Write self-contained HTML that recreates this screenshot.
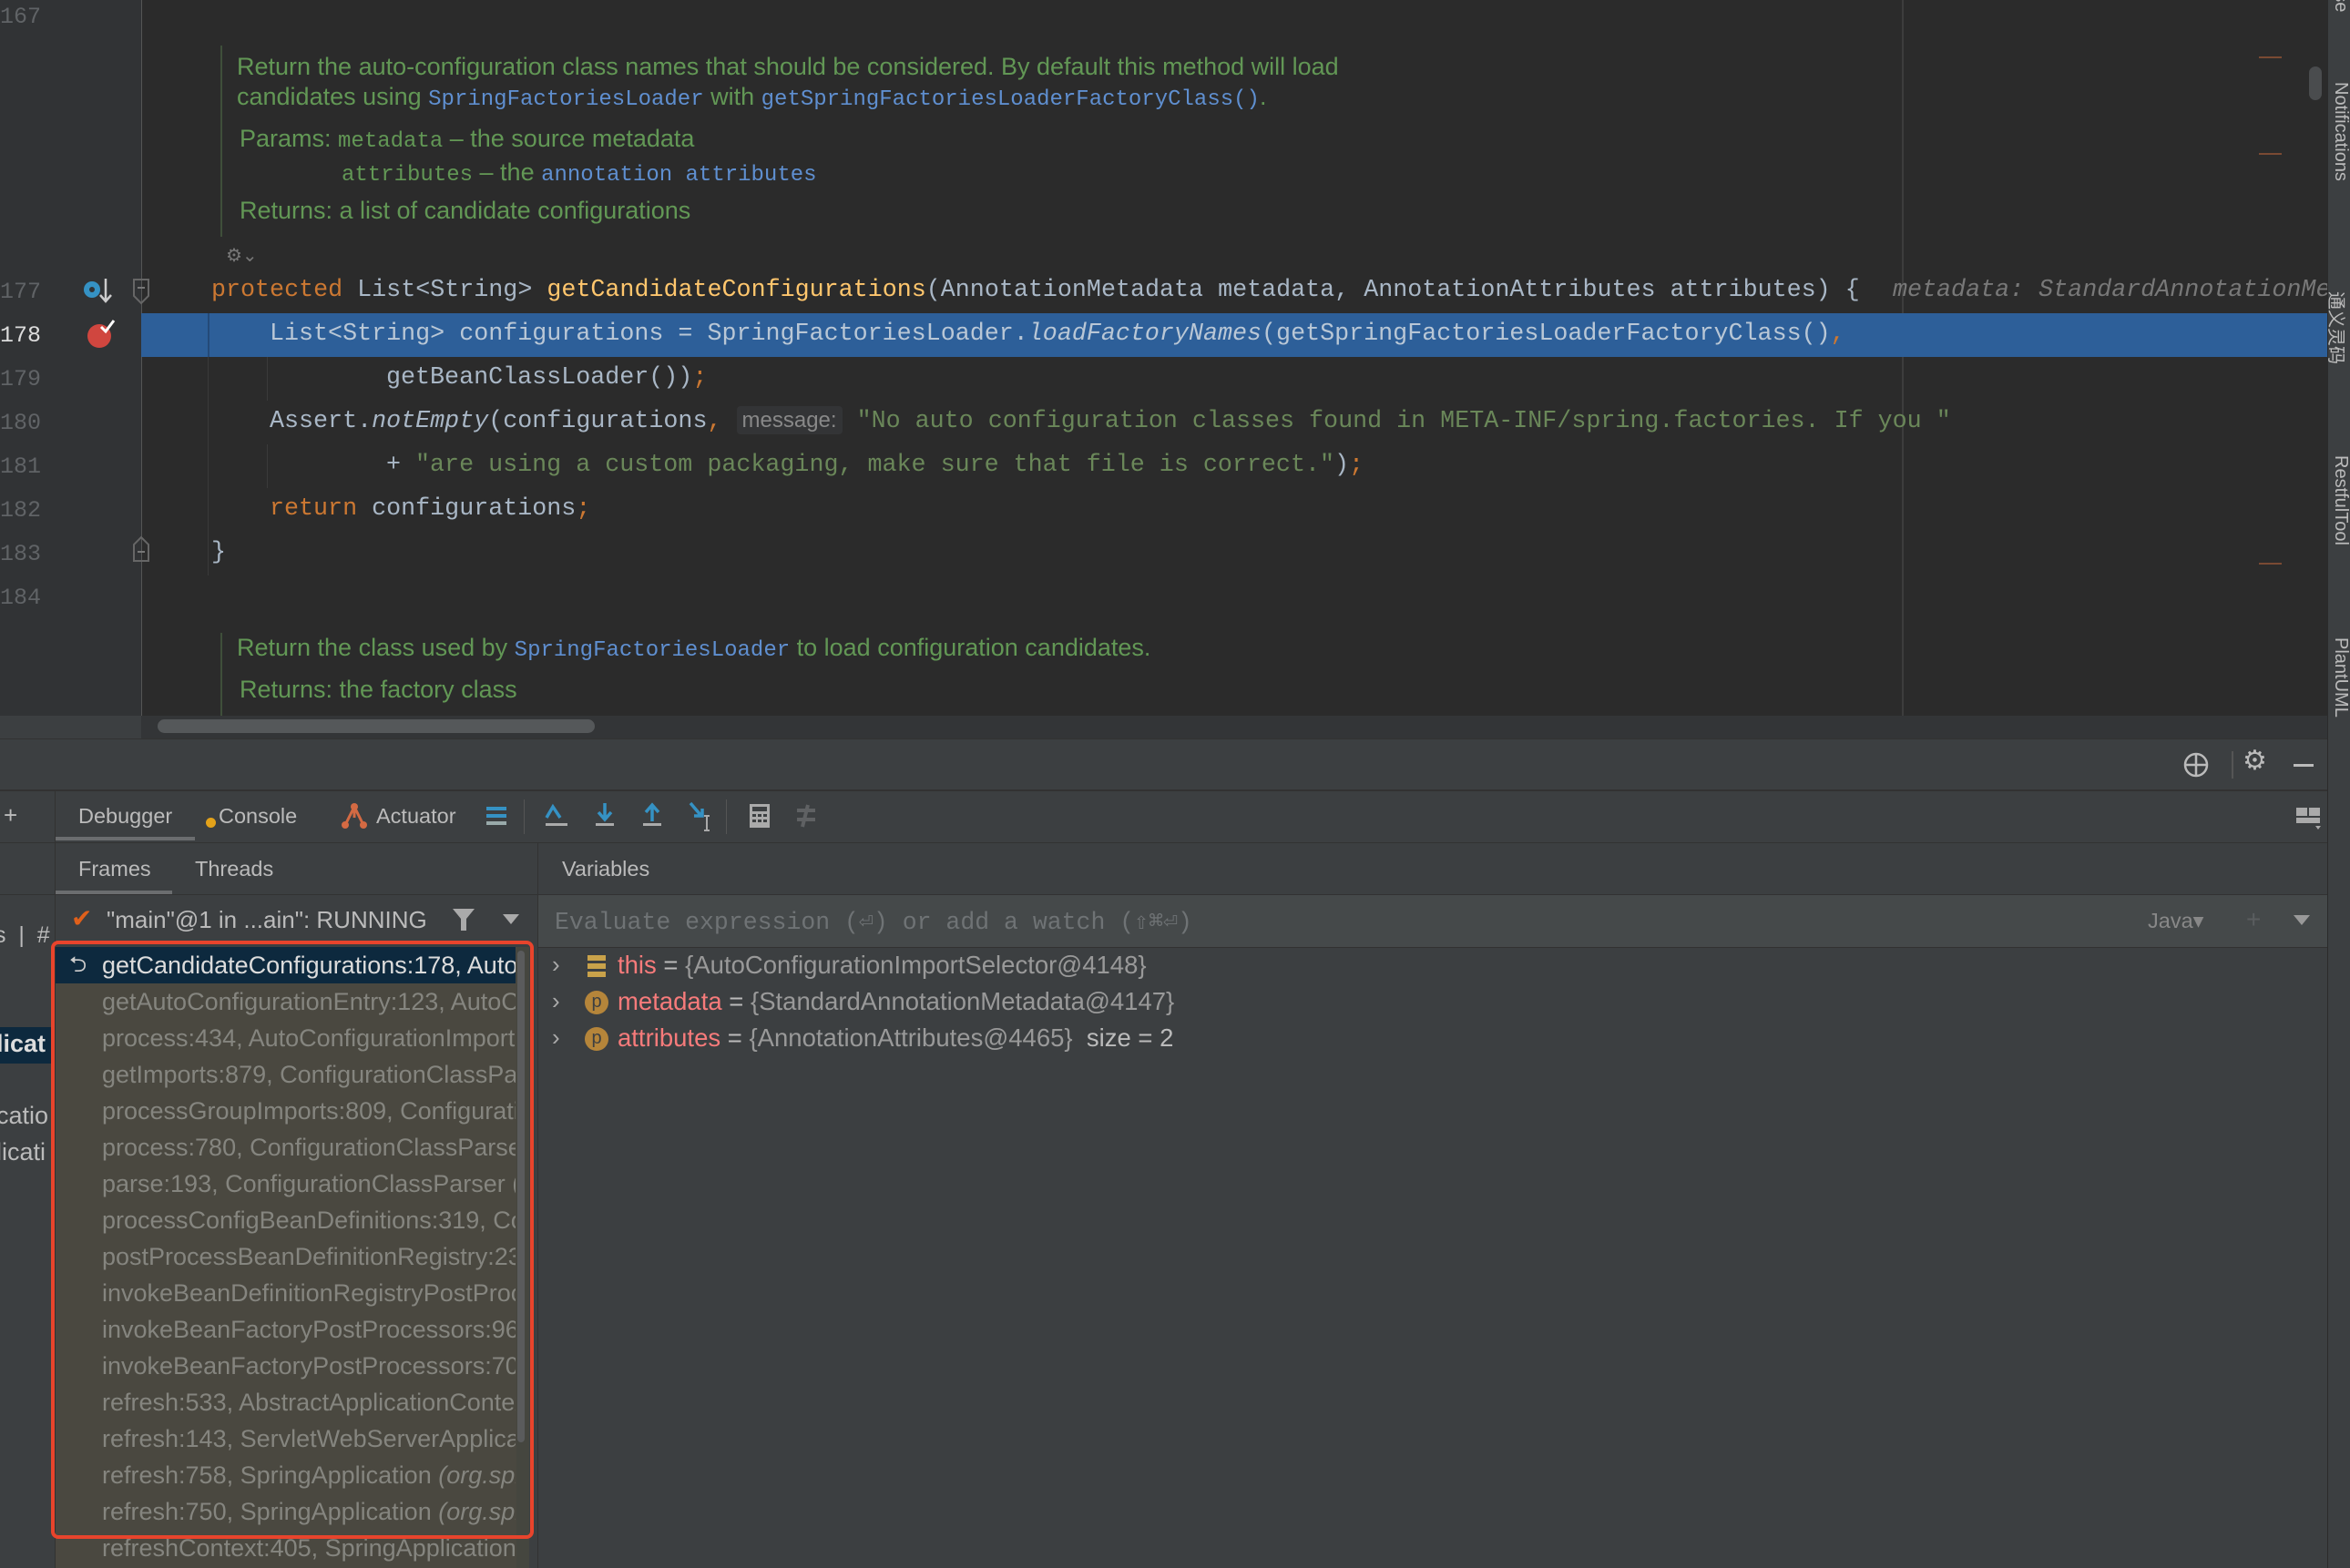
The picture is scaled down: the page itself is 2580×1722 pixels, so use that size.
<!DOCTYPE html>
<html><head><meta charset="utf-8"><style>
*{margin:0;padding:0;box-sizing:border-box}
body{width:2580px;height:1722px;background:#3c3f41;position:relative;overflow:hidden;font-family:"Liberation Sans","Noto Sans CJK SC",sans-serif}
.a{position:absolute;white-space:pre}
.mono{font-family:"Liberation Mono",monospace}
.ln{position:absolute;left:0;width:44px;text-align:right;font-family:"Liberation Mono",monospace;font-size:25px;color:#606366}
.code{position:absolute;font-family:"Liberation Mono",monospace;font-size:26.7px;color:#a9b7c6;white-space:pre}
.kw{color:#cc7832}.fn{color:#ffc66d}.str{color:#6a8759}.it{font-style:italic}
.doc{position:absolute;font-size:27px;color:#629755;white-space:pre}
.dl{font-family:"Liberation Mono",monospace;color:#5f8fd0;font-size:24px}
.dm{font-family:"Liberation Mono",monospace;font-size:24px}
.fr{position:absolute;left:112px;font-size:27px;color:#85857f;white-space:pre}
.ui{font-size:23.5px;color:#bbbbbb}
</style></head><body>
<div class="a" style="left:0;top:0;width:2555px;height:786px;background:#2b2b2b"></div>
<div class="a" style="left:0;top:0;width:155px;height:786px;background:#313335"></div>
<div class="a" style="left:155px;top:0;width:1px;height:786px;background:#555"></div>
<div class="a" style="left:2088px;top:0;width:2px;height:786px;background:#3d3d3d"></div>
<div class="a" style="left:155px;top:344px;width:2400px;height:48px;background:#2d5f99"></div>
<div class="a" style="left:228px;top:344px;width:2px;height:48px;background:#244a78"></div>
<div class="a" style="left:228px;top:392px;width:1px;height:240px;background:#3a3a3a"></div>
<div class="a" style="left:293px;top:392px;width:1px;height:48px;background:#3a3a3a"></div>
<div class="a" style="left:293px;top:488px;width:1px;height:48px;background:#3a3a3a"></div>
<div class="ln" style="top:4px">167</div>
<div class="ln" style="top:306px">177</div>
<div class="ln" style="top:354px;color:#dcdcdc">178</div>
<div class="ln" style="top:402px">179</div>
<div class="ln" style="top:450px">180</div>
<div class="ln" style="top:498px">181</div>
<div class="ln" style="top:546px">182</div>
<div class="ln" style="top:594px">183</div>
<div class="ln" style="top:642px">184</div>
<svg class="a" style="left:90px;top:303px" width="36" height="34"><circle cx="11" cy="15" r="9" fill="#3592c4"/><circle cx="11" cy="15" r="3" fill="#313335"/><path d="M26 3v24M20 21l6 7 6-7" stroke="#ccc" stroke-width="2.5" fill="none"/></svg>
<svg class="a" style="left:94px;top:350px" width="34" height="34"><circle cx="15" cy="19" r="13" fill="#d0463f"/><path d="M17 9l5 5 9-12" stroke="#fff" stroke-width="3" fill="none"/></svg>
<svg class="a" style="left:145px;top:305px" width="20" height="30"><path d="M2 2h16v18l-8 8-8-8z" stroke="#666" stroke-width="2" fill="none"/><path d="M6 11h8" stroke="#777" stroke-width="2"/></svg>
<svg class="a" style="left:145px;top:588px" width="20" height="30"><path d="M2 28h16V10L10 2 2 10z" stroke="#666" stroke-width="2" fill="none"/><path d="M6 18h8" stroke="#777" stroke-width="2"/></svg>
<div class="a" style="left:242px;top:50px;width:2px;height:210px;background:#3f4f3a"></div>
<div class="doc" style="left:260px;top:58px">Return the auto-configuration class names that should be considered. By default this method will load</div>
<div class="doc" style="left:260px;top:91px">candidates using <span class="dl">SpringFactoriesLoader</span> with <span class="dl">getSpringFactoriesLoaderFactoryClass()</span>.</div>
<div class="doc" style="left:263px;top:137px">Params: <span class="dm">metadata</span> – the source metadata</div>
<div class="doc" style="left:375px;top:174px"><span class="dm">attributes</span> – the <span class="dl">annotation attributes</span></div>
<div class="doc" style="left:263px;top:216px">Returns: a list of candidate configurations</div>
<div class="a" style="left:248px;top:268px;color:#777;font-size:20px">⚙⌄</div>
<div class="code" style="left:232px;top:304px"><span class="kw">protected</span> List&lt;String&gt; <span class="fn">getCandidateConfigurations</span>(AnnotationMetadata metadata, AnnotationAttributes attributes) {</div>
<div class="code it" style="left:2078px;top:304px;color:#787878">metadata: StandardAnnotationMe</div>
<div class="code" style="left:296px;top:352px;color:#b9c7d6">List&lt;String&gt; configurations = SpringFactoriesLoader.<span class="it">loadFactoryNames</span>(getSpringFactoriesLoaderFactoryClass()<span class="kw">,</span></div>
<div class="code" style="left:424px;top:400px">getBeanClassLoader())<span class="kw">;</span></div>
<div class="code" style="left:296px;top:448px">Assert.<span class="it">notEmpty</span>(configurations<span class="kw">,</span> <span style="background:#333436;color:#888;font-family:'Liberation Sans',sans-serif;font-size:24px;padding:2px 6px;border-radius:4px">message:</span> <span class="str">"No auto configuration classes found in META-INF/spring.factories. If you "</span></div>
<div class="code" style="left:424px;top:496px">+ <span class="str">"are using a custom packaging, make sure that file is correct."</span>)<span class="kw">;</span></div>
<div class="code" style="left:296px;top:544px"><span class="kw">return</span> configurations<span class="kw">;</span></div>
<div class="code" style="left:232px;top:592px">}</div>
<div class="a" style="left:242px;top:695px;width:2px;height:91px;background:#3f4f3a"></div>
<div class="doc" style="left:260px;top:696px">Return the class used by <span class="dl">SpringFactoriesLoader</span> to load configuration candidates.</div>
<div class="doc" style="left:263px;top:742px">Returns: the factory class</div>
<div class="a" style="left:2480px;top:62px;width:25px;height:2px;background:#7a4a33"></div>
<div class="a" style="left:2480px;top:168px;width:25px;height:2px;background:#7a4a33"></div>
<div class="a" style="left:2480px;top:618px;width:25px;height:2px;background:#7a4a33"></div>
<div class="a" style="left:2535px;top:73px;width:14px;height:37px;background:#4a4c4e;border-radius:7px"></div>
<div class="a" style="left:155px;top:786px;width:2400px;height:25px;background:#333537"></div>
<div class="a" style="left:173px;top:790px;width:480px;height:15px;background:#55585a;border-radius:8px"></div>
<div class="a" style="left:2555px;top:0;width:25px;height:1722px;background:#3c3f41;border-left:1px solid #2b2b2b"></div>
<div class="a" style="left:2555px;top:0;width:25px;height:1722px;overflow:hidden">
<div class="a ui" style="left:26px;top:-30px;transform:rotate(90deg);transform-origin:0 0;font-size:20px">base</div>
<div class="a ui" style="left:26px;top:90px;transform:rotate(90deg);transform-origin:0 0;font-size:20px">Notifications</div>
<div class="a ui" style="left:26px;top:320px;transform:rotate(90deg);transform-origin:0 0;font-size:20px">通义灵码</div>
<div class="a ui" style="left:26px;top:500px;transform:rotate(90deg);transform-origin:0 0;font-size:20px">RestfulTool</div>
<div class="a ui" style="left:26px;top:700px;transform:rotate(90deg);transform-origin:0 0;font-size:20px">PlantUML</div>
</div>
<div class="a" style="left:0;top:811px;width:2555px;height:1px;background:#323232"></div>
<svg class="a" style="left:2395px;top:824px" width="32" height="32"><circle cx="16" cy="16" r="12" stroke="#bbb" stroke-width="2.5" fill="none"/><path d="M16 4v24M4 16h24" stroke="#bbb" stroke-width="2.5"/></svg>
<div class="a" style="left:2450px;top:825px;width:2px;height:30px;background:#555"></div>
<div class="a" style="left:2462px;top:818px;font-size:30px;color:#bbb">⚙</div>
<div class="a" style="left:2518px;top:839px;width:22px;height:3px;background:#bbb"></div>
<div class="a" style="left:0;top:867px;width:2555px;height:2px;background:#323232"></div>
<div class="a ui" style="left:4px;top:880px;font-size:26px">+</div>
<div class="a" style="left:60px;top:868px;width:1px;height:854px;background:#323232"></div>
<div class="a ui" style="left:86px;top:883px">Debugger</div>
<div class="a" style="left:61px;top:919px;width:153px;height:4px;background:#6b6d6f"></div>
<div class="a" style="left:226px;top:898px;width:11px;height:11px;border-radius:6px;background:#e3a21a"></div>
<div class="a ui" style="left:240px;top:883px">Console</div>
<svg class="a" style="left:373px;top:880px" width="32" height="32"><circle cx="16" cy="6" r="4" fill="#d46a43"/><circle cx="6" cy="26" r="4" fill="#d46a43"/><circle cx="26" cy="26" r="4" fill="#d46a43"/><path d="M16 6L6 26M16 6l10 20M16 6v12" stroke="#d46a43" stroke-width="3"/></svg>
<div class="a ui" style="left:413px;top:883px">Actuator</div>
<svg class="a" style="left:533px;top:884px" width="24" height="26"><rect x="1" y="2" width="22" height="4" fill="#3592c4"/><rect x="1" y="10" width="22" height="4" fill="#3592c4"/><rect x="1" y="18" width="22" height="4" fill="#9aa"/></svg>
<div class="a" style="left:575px;top:878px;width:1px;height:38px;background:#555"></div>
<svg class="a" style="left:597px;top:880px" width="28" height="30"><path d="M3 18L10 6l8 12" stroke="#3592c4" stroke-width="3.5" fill="none"/><rect x="2" y="24" width="24" height="3" fill="#aaa"/></svg>
<svg class="a" style="left:650px;top:880px" width="28" height="30"><path d="M14 2v16M7 12l7 8 7-8" stroke="#3592c4" stroke-width="3.5" fill="none"/><rect x="4" y="24" width="20" height="3" fill="#aaa"/></svg>
<svg class="a" style="left:702px;top:880px" width="28" height="30"><path d="M14 22V6M7 12l7-8 7 8" stroke="#3592c4" stroke-width="3.5" fill="none"/><rect x="4" y="24" width="20" height="3" fill="#aaa"/></svg>
<svg class="a" style="left:754px;top:880px" width="30" height="34"><path d="M4 2l12 14M8 16h9V8" stroke="#3592c4" stroke-width="3.5" fill="none"/><path d="M22 16v16M19 16h6M19 32h6" stroke="#aaa" stroke-width="2"/></svg>
<div class="a" style="left:797px;top:878px;width:1px;height:38px;background:#555"></div>
<svg class="a" style="left:822px;top:882px" width="24" height="28"><rect x="1" y="1" width="22" height="26" fill="#aaa"/><rect x="4" y="4" width="16" height="5" fill="#3c3f41"/><g fill="#3c3f41"><rect x="4" y="12" width="4" height="3"/><rect x="10" y="12" width="4" height="3"/><rect x="16" y="12" width="4" height="3"/><rect x="4" y="18" width="4" height="3"/><rect x="10" y="18" width="4" height="3"/><rect x="16" y="18" width="4" height="3"/></g></svg>
<svg class="a" style="left:873px;top:882px" width="24" height="28"><path d="M2 8h20M2 18h20M14 2L8 26" stroke="#5f6163" stroke-width="4"/></svg>
<svg class="a" style="left:2520px;top:884px" width="30" height="28"><rect x="1" y="3" width="12" height="9" fill="#aaa"/><rect x="15" y="3" width="12" height="9" fill="#aaa"/><rect x="1" y="14" width="26" height="6" fill="#aaa"/><path d="M22 23l3 4 3-4z" fill="#aaa"/></svg>
<div class="a" style="left:0;top:925px;width:2555px;height:1px;background:#323232"></div>
<div class="a" style="left:590px;top:926px;width:1px;height:796px;background:#323232"></div>
<div class="a ui" style="left:86px;top:941px">Frames</div>
<div class="a" style="left:61px;top:978px;width:128px;height:4px;background:#6b6d6f"></div>
<div class="a ui" style="left:214px;top:941px">Threads</div>
<div class="a ui" style="left:617px;top:941px">Variables</div>
<div class="a" style="left:0;top:982px;width:2555px;height:1px;background:#323232"></div>
<div class="a" style="left:78px;top:992px;font-size:28px;color:#e0601b">✔</div>
<div class="a ui" style="left:117px;top:995px;font-size:26px">"main"@1 in ...ain": RUNNING</div>
<svg class="a" style="left:496px;top:996px" width="26" height="28"><path d="M1 2h24l-9 11v13h-6V13z" fill="#aaa"/></svg>
<svg class="a" style="left:552px;top:1004px" width="18" height="12"><path d="M0 0h18L9 11z" fill="#aaa"/></svg>
<div class="a" style="left:591px;top:983px;width:1964px;height:57px;background:#45494a"></div>
<div class="a mono" style="left:609px;top:996px;font-size:26.5px;color:#6f7375">Evaluate expression (⏎) or add a watch (⇧⌘⏎)</div>
<div class="a ui" style="left:2358px;top:997px;color:#888">Java▾</div>
<div class="a" style="left:2466px;top:994px;font-size:28px;color:#5a5d5f">+</div>
<svg class="a" style="left:2518px;top:1005px" width="18" height="12"><path d="M0 0h18L9 11z" fill="#999"/></svg>
<div class="a" style="left:591px;top:1040px;width:1964px;height:1px;background:#323232"></div>
<div class="a" style="left:606px;top:1044px;font-size:26px;color:#aaa">›</div>
<div class="a" style="left:606px;top:1084px;font-size:26px;color:#aaa">›</div>
<div class="a" style="left:606px;top:1124px;font-size:26px;color:#aaa">›</div>
<svg class="a" style="left:645px;top:1049px" width="20" height="24"><rect x="0" y="0" width="20" height="6" fill="#c9a24a"/><rect x="0" y="9" width="20" height="6" fill="#c9a24a"/><rect x="0" y="18" width="20" height="6" fill="#c9a24a"/></svg>
<div class="a" style="left:642px;top:1088px;width:26px;height:26px;border-radius:13px;background:#b5853a;color:#3c3f41;font-size:20px;text-align:center;line-height:25px">p</div>
<div class="a" style="left:642px;top:1128px;width:26px;height:26px;border-radius:13px;background:#b5853a;color:#3c3f41;font-size:20px;text-align:center;line-height:25px">p</div>
<div class="a" style="left:678px;top:1044px;font-size:27.5px;color:#bbb"><span style="color:#f77b7b">this</span> = <span style="color:#999">{AutoConfigurationImportSelector@4148}</span></div>
<div class="a" style="left:678px;top:1084px;font-size:27.5px;color:#bbb"><span style="color:#f77b7b">metadata</span> = <span style="color:#999">{StandardAnnotationMetadata@4147}</span></div>
<div class="a" style="left:678px;top:1124px;font-size:27.5px;color:#bbb"><span style="color:#f77b7b">attributes</span> = <span style="color:#999">{AnnotationAttributes@4465}</span>  size = 2</div>
<div class="a ui" style="left:-6px;top:1013px;font-size:25px">s  |  #</div>
<div class="a" style="left:0;top:1128px;width:58px;height:40px;background:#0d293e"></div>
<div class="a" style="left:-4px;top:1131px;font-size:27px;color:#ddd;font-weight:bold">licat</div>
<div class="a ui" style="left:-4px;top:1210px;font-size:27px">catio</div>
<div class="a ui" style="left:-4px;top:1250px;font-size:27px">licati</div>
<div class="a" style="left:61px;top:1040px;width:520px;height:682px;background:#4a4840"></div>
<div class="a" style="left:61px;top:1040px;width:505px;height:40px;background:#0d293e"></div>
<div class="a" style="left:76px;top:1042px;font-size:24px;color:#ccc">⮌</div>
<div class="a" style="left:61px;top:1040px;width:505px;height:682px;overflow:hidden">
<div class="fr" style="left:51px;top:5px;color:#dcdcdc">getCandidateConfigurations:178, AutoConfig</div>
<div class="fr" style="left:51px;top:45px">getAutoConfigurationEntry:123, AutoConfigurationImportSelector</div>
<div class="fr" style="left:51px;top:85px">process:434, AutoConfigurationImportSelector</div>
<div class="fr" style="left:51px;top:125px">getImports:879, ConfigurationClassParser</div>
<div class="fr" style="left:51px;top:165px">processGroupImports:809, ConfigurationClassParser</div>
<div class="fr" style="left:51px;top:205px">process:780, ConfigurationClassParser</div>
<div class="fr" style="left:51px;top:245px">parse:193, ConfigurationClassParser (org</div>
<div class="fr" style="left:51px;top:285px">processConfigBeanDefinitions:319, Config</div>
<div class="fr" style="left:51px;top:325px">postProcessBeanDefinitionRegistry:232</div>
<div class="fr" style="left:51px;top:365px">invokeBeanDefinitionRegistryPostProcessors</div>
<div class="fr" style="left:51px;top:405px">invokeBeanFactoryPostProcessors:96</div>
<div class="fr" style="left:51px;top:445px">invokeBeanFactoryPostProcessors:70</div>
<div class="fr" style="left:51px;top:485px">refresh:533, AbstractApplicationContext</div>
<div class="fr" style="left:51px;top:525px">refresh:143, ServletWebServerApplicationContext</div>
<div class="fr" style="left:51px;top:565px">refresh:758, SpringApplication <i>(org.springframework)</i></div>
<div class="fr" style="left:51px;top:605px">refresh:750, SpringApplication <i>(org.springframework)</i></div>
<div class="fr" style="left:51px;top:645px">refreshContext:405, SpringApplication</div>
</div>
<div class="a" style="left:567px;top:1040px;width:14px;height:682px;background:#45463f"></div>
<div class="a" style="left:568px;top:1044px;width:8px;height:540px;background:#5a5b5c;border-radius:4px"></div>
<div class="a" style="left:56px;top:1033px;width:530px;height:657px;border:4px solid #e8442c;border-radius:8px"></div>
</body></html>
